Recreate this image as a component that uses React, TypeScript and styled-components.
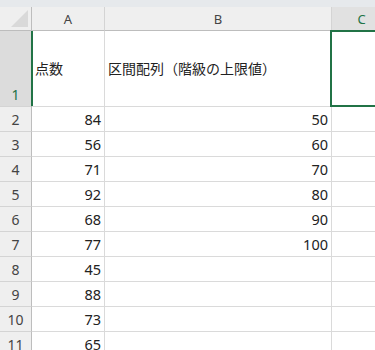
import React from 'react'
import styled, { createGlobalStyle, css } from 'styled-components'

const GlobalStyle = createGlobalStyle`
  html, body {
    margin: 0;
    padding: 0;
    background: #ffffff;
    overflow: hidden;
  }
  body {
    font-family: "Noto Sans", "Noto Sans CJK JP", sans-serif;
  }
`

const green = '#217346'

const TopStrip = styled.div`
  height: 7px;
  background: #e6e9ec;
`

const Grid = styled.div`
  display: grid;
  grid-template-columns: 32px 73px 227px 60px;
  grid-template-rows: 24px 76px repeat(10, 25px);
`

const Corner = styled.div`
  position: relative;
  background: #efefef;
  border-right: 1px solid #bdbdbd;
  border-bottom: 1px solid #bdbdbd;
  box-sizing: border-box;
  svg {
    position: absolute;
    right: 3px;
    bottom: 3px;
  }
`

const ColHead = styled.div<{ $active?: boolean }>`
  box-sizing: border-box;
  display: flex;
  align-items: center;
  justify-content: center;
  background: ${({ $active }) => ($active ? '#e1e1e1' : '#efefef')};
  color: ${({ $active }) => ($active ? green : '#444')};
  border-right: 1px solid #d4d4d4;
  border-bottom: 1px solid #bdbdbd;
  font-size: 13px;
  padding-top: 1px;
`

const RowHead = styled.div<{ $active?: boolean }>`
  box-sizing: border-box;
  display: flex;
  align-items: flex-end;
  justify-content: center;
  padding-bottom: 2px;
  font-size: 14px;
  background: ${({ $active }) => ($active ? '#dcdcdc' : '#efefef')};
  color: ${({ $active }) => ($active ? green : '#444')};
  border-bottom: 1px solid #d4d4d4;
  ${({ $active }) =>
    $active
      ? css`
          border-right: 2px solid ${green};
          margin-right: -1px;
        `
      : css`
          border-right: 1px solid #bdbdbd;
        `}
`

const Cell = styled.div<{ $num?: boolean; $middle?: boolean; $selected?: boolean }>`
  position: relative;
  box-sizing: border-box;
  display: flex;
  align-items: ${({ $middle }) => ($middle ? 'center' : 'flex-end')};
  justify-content: ${({ $num }) => ($num ? 'flex-end' : 'flex-start')};
  padding: 0 3px 2px 3px;
  border-right: 1px solid #dadada;
  border-bottom: 1px solid #dadada;
  color: #222;
  font-size: ${({ $num }) => ($num ? '14.5px' : '14px')};
  white-space: nowrap;
  ${({ $selected }) =>
    $selected &&
    css`
      &::after {
        content: '';
        position: absolute;
        left: -2px;
        top: -1px;
        right: -2px;
        bottom: -1px;
        border: 2px solid ${green};
      }
    `}
`

const scores = [84, 56, 71, 92, 68, 77, 45, 88, 73, 65]
const bins = [50, 60, 70, 80, 90, 100]

export default function App() {
  return (
    <>
      <GlobalStyle />
      <TopStrip />
      <Grid>
        <Corner>
          <svg width="17" height="17" viewBox="0 0 17 17">
            <polygon points="17,0 17,17 0,17" fill="#d9d9d9" />
          </svg>
        </Corner>
        <ColHead>A</ColHead>
        <ColHead>B</ColHead>
        <ColHead $active>C</ColHead>

        <RowHead $active>1</RowHead>
        <Cell $middle>点数</Cell>
        <Cell $middle>区間配列（階級の上限値）</Cell>
        <Cell $selected />

        {scores.map((s, i) => (
          <React.Fragment key={i}>
            <RowHead>{i + 2}</RowHead>
            <Cell $num>{s}</Cell>
            <Cell $num>{bins[i] ?? ''}</Cell>
            <Cell />
          </React.Fragment>
        ))}
      </Grid>
    </>
  )
}
